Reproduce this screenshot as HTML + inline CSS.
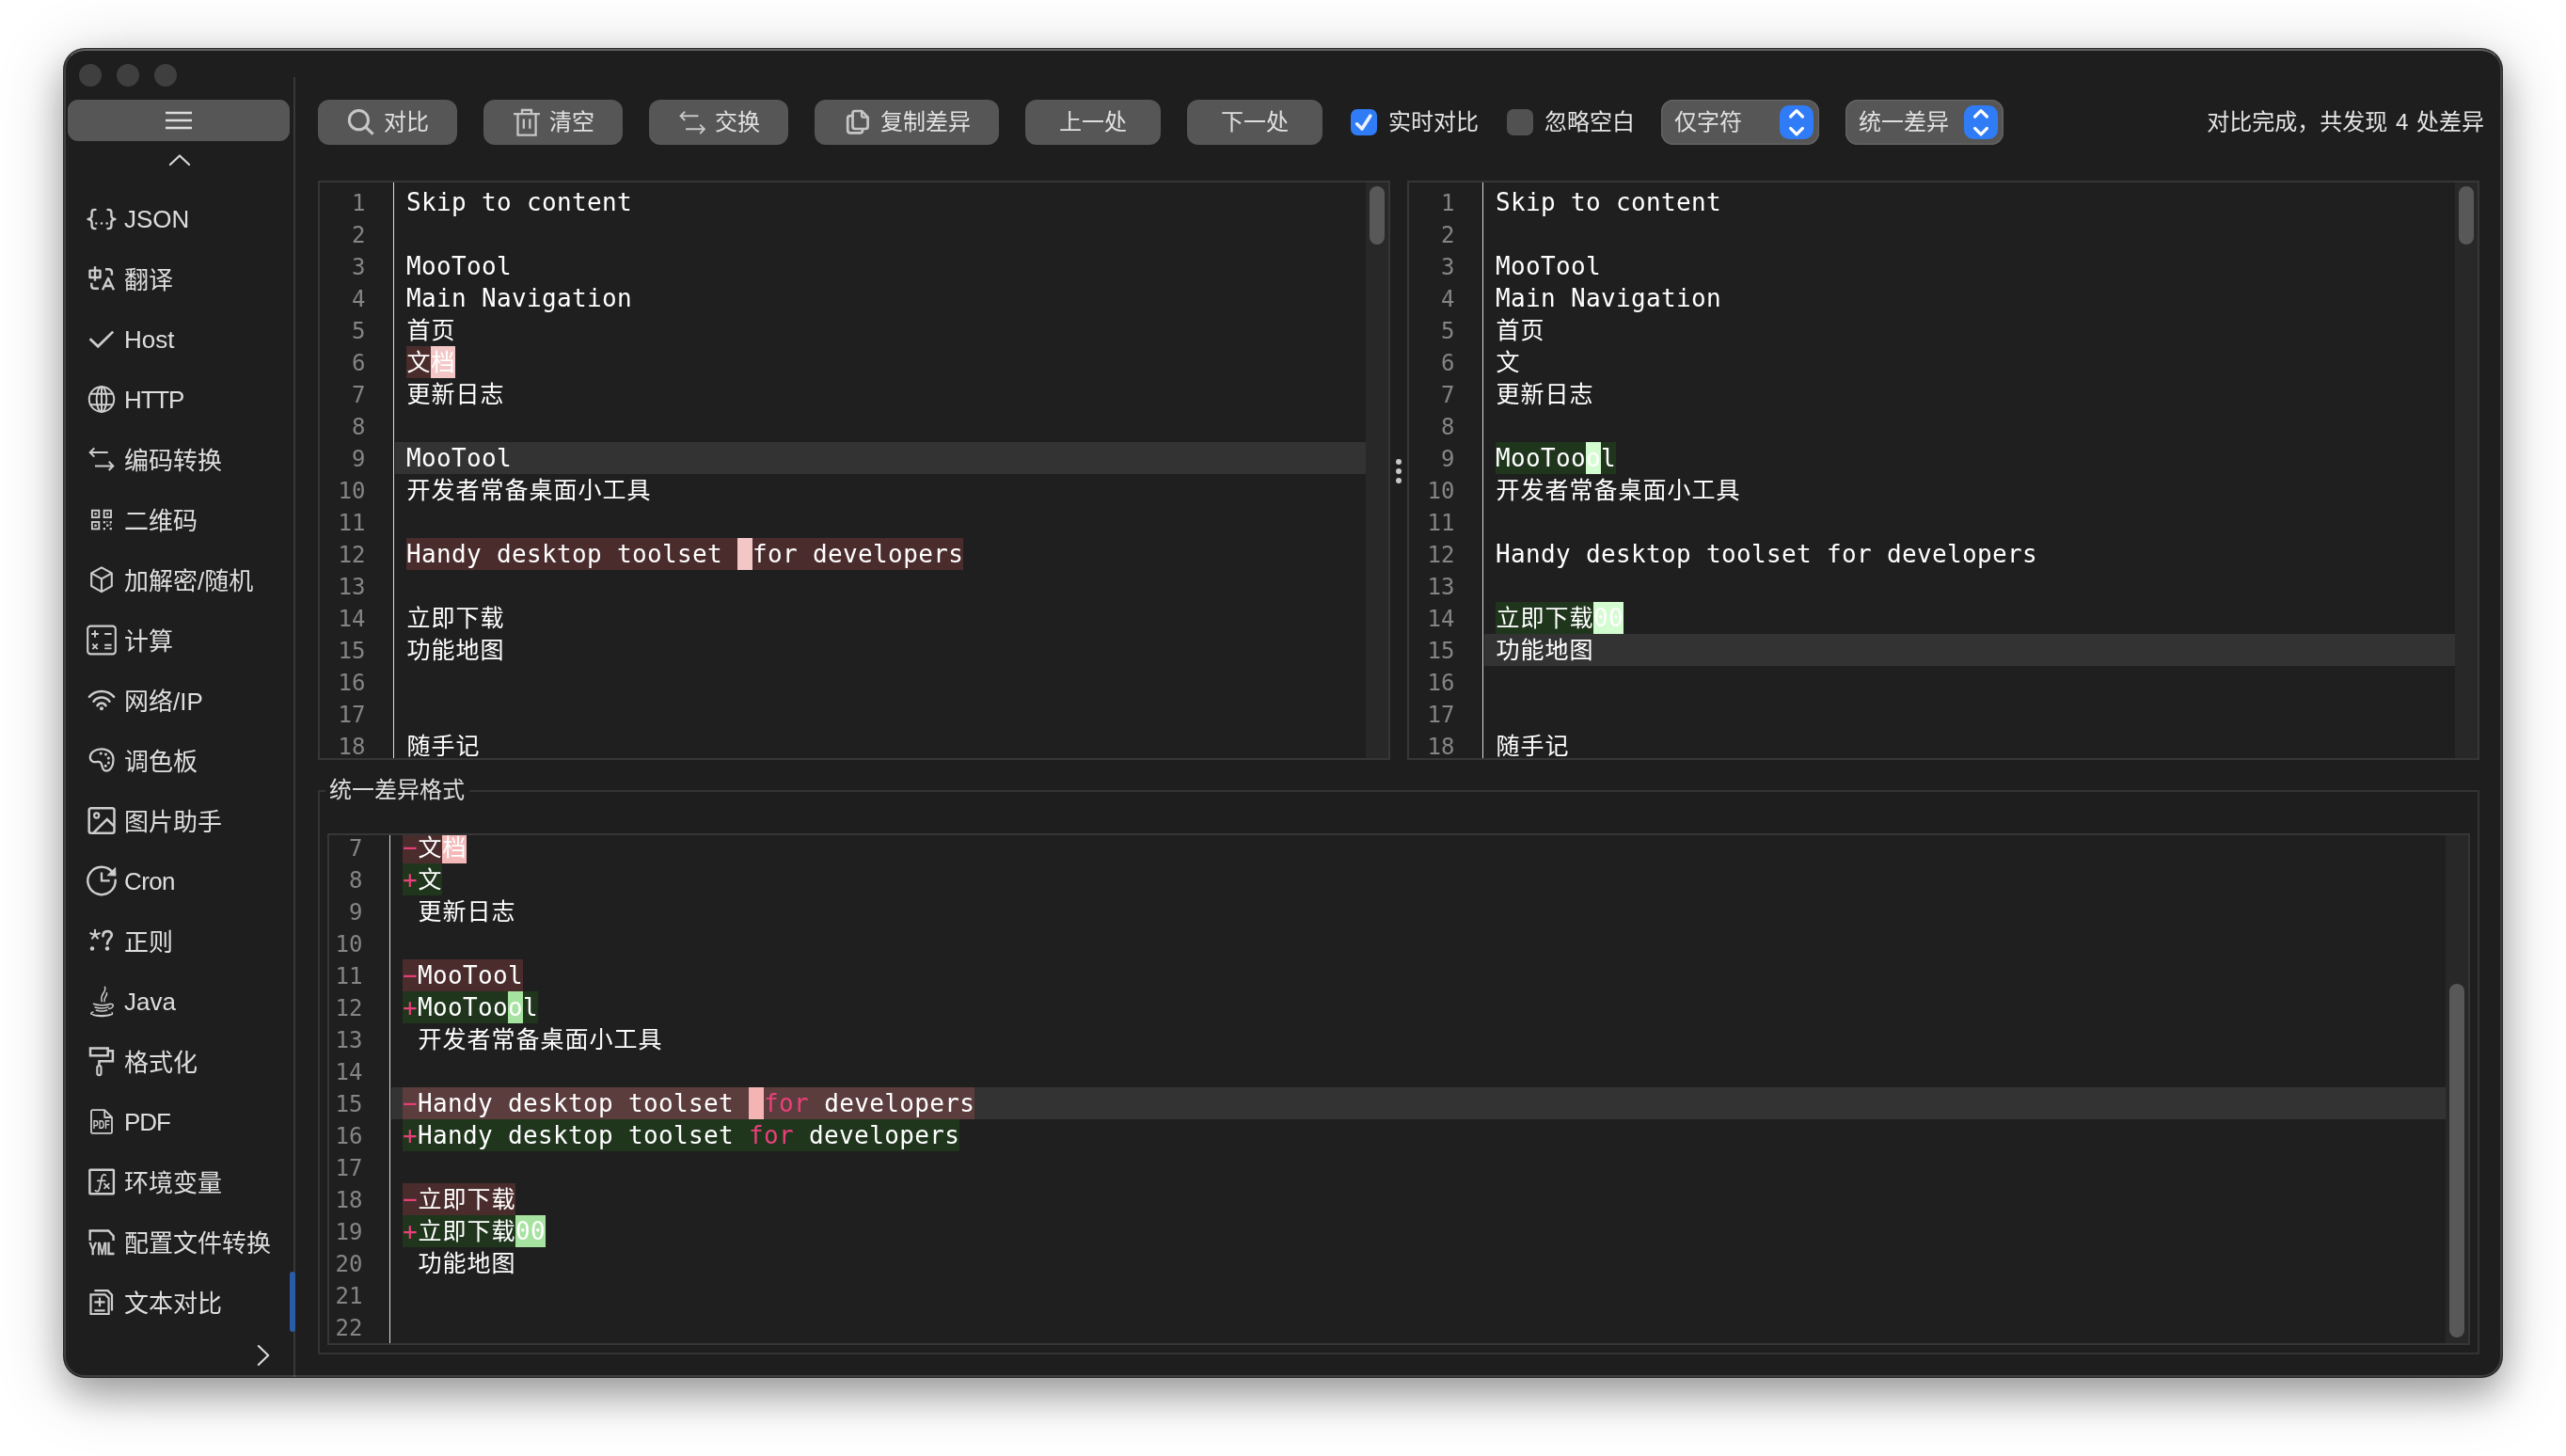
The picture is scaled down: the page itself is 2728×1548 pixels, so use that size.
<!DOCTYPE html><html lang="zh-CN"><head><meta charset="utf-8"><title>MooTool</title><style>
*{box-sizing:border-box;margin:0;padding:0}
html,body{width:2728px;height:1548px;overflow:hidden;background:#fff}
body{position:relative;font-family:"Liberation Sans","Noto Sans CJK SC",sans-serif;color:#dcdcdc}
.abs{position:absolute}
#win{position:absolute;left:68px;top:52px;width:2592px;height:1412px;background:#1e1e1e;border-radius:22px;
 box-shadow:0 0 0 1px rgba(0,0,0,.8),0 18px 38px rgba(0,0,0,.29),0 12px 72px rgba(0,0,0,.22);overflow:hidden;will-change:transform}
#win:after{content:"";position:absolute;left:0;top:0;right:0;bottom:0;border-radius:22px;border:2px solid rgba(255,255,255,.15);border-top-color:rgba(255,255,255,.3);pointer-events:none}
.tl{position:absolute;width:24px;height:24px;border-radius:50%;background:#3f3f3f;top:16px}
.sep{position:absolute;left:244px;top:30px;width:2px;bottom:0;background:#383838}
.hbtn{position:absolute;left:4px;top:54px;width:236px;height:44px;border-radius:11px;background:#565656}
.item{position:absolute;left:64px;height:40px;line-height:40px;font-size:26px;color:#dedede;white-space:nowrap}
.ico{position:absolute;left:22px;width:36px;height:36px}
.ico svg{width:36px;height:36px;display:block;fill:none;stroke:#cdcdcd;stroke-width:2.2;stroke-linecap:round;stroke-linejoin:round;overflow:visible}
.btn{position:absolute;top:54px;height:48px;border-radius:12px;background:#565656;color:#e0e0e0;font-size:24px;line-height:48px;white-space:nowrap}
.btn span{position:absolute;top:0}
.btn svg{position:absolute;left:0;top:0;fill:none;stroke:#c6c6c6;stroke-width:2.4;stroke-linecap:round;stroke-linejoin:round}
.cb{position:absolute;top:64px;width:28px;height:28px;border-radius:7px}
.lbl{position:absolute;top:54px;height:48px;line-height:48px;word-spacing:2px;font-size:24px;color:#e4e4e4;white-space:nowrap}
.sel{position:absolute;top:54px;height:48px;border-radius:13px;background:#565656;box-shadow:inset 0 0 0 1.5px #626262;font-size:24px;line-height:48px;color:#e0e0e0}
.sel .t{position:absolute;left:14px;top:0}
.sel .a{position:absolute;right:6px;top:6px;width:36px;height:36px;border-radius:10px;background:#2f7cf6}
.panel{position:absolute;border:2px solid #363636;background:#1f1f1f;overflow:hidden}
.code{font-family:"DejaVu Sans Mono","Noto Sans CJK SC",monospace;font-size:26px;letter-spacing:0.35px;color:#fff;white-space:pre}
.ln{position:absolute;left:0;height:34px;line-height:34px;text-align:right;color:#858585;font-family:"DejaVu Sans Mono",monospace;font-size:24px}
.row{position:absolute;height:34px;line-height:34px;white-space:pre}
.row span{display:inline-block;height:34px;line-height:34px;vertical-align:top}
.row i{font-style:normal;font-family:"Noto Sans CJK SC",sans-serif;display:inline-block;height:34px;line-height:34px;vertical-align:top;letter-spacing:1px;font-size:25px;position:relative;top:-2px;left:.5px}
.gsep{position:absolute;top:0;bottom:0;width:1px;background:#dcdcdc}
.hl{position:absolute;height:34px;background:#333}
.rm{background:#4b2c2c}.rmc{background:#f4c7c7}
.ad{background:#1f361d}.adc{background:#d3fcd0}
.k{color:#e8407a}
.track{position:absolute;top:0;bottom:0;width:24px;background:#282828}
.thumb{position:absolute;width:16px;border-radius:8px;background:#585858}
</style></head><body><div id="win"><div class="tl" style="left:16px"></div><div class="tl" style="left:56px"></div><div class="tl" style="left:96px"></div><div class="sep"></div><div class="hbtn"><svg class="abs" style="left:102px;top:10px" width="32" height="24" viewBox="0 0 32 24" fill="none" stroke="#dcdcdc" stroke-width="2.4"><path d="M2 4H30M2 12H30M2 20H30"/></svg></div><svg class="abs" style="left:107px;top:107px" width="32" height="20" viewBox="0 0 32 20" fill="none" stroke="#d6d6d6" stroke-width="2.2" stroke-linecap="round" stroke-linejoin="round"><path d="M5.9 16L16 6.5L26.1 16"/></svg><div class="ico" style="top:162.5px"><svg viewBox="0 0 36 36"><g stroke-width="2.4"><path d="M11.5 7.9H10.5C8.3 7.9 7.6 8.9 7.6 10.9V14.3C7.6 16.6 6.3 17.6 3.6 18C6.3 18.4 7.6 19.4 7.6 21.7V25.1C7.6 27.1 8.3 28.1 10.5 28.1H11.5"/><path d="M24.5 7.9H25.5C27.7 7.9 28.4 8.9 28.4 10.9V14.3C28.4 16.6 29.7 17.6 32.4 18C29.7 18.4 28.4 19.4 28.4 21.7V25.1C28.4 27.1 27.7 28.1 25.5 28.1H24.5"/></g><path d="M12.3 22.5h.01M18 22.5h.01M23.7 22.5h.01" stroke-width="2.5"/></svg></div><div class="item" style="top:161px">JSON</div><div class="ico" style="top:226.5px"><svg viewBox="0 0 36 36"><g stroke-width="2.4" stroke-linecap="butt"><path d="M5.5 8.6H16.5V16H5.5ZM11 4.2V19.8"/><path d="M22 7.2H25.5C27.8 7.2 28.9 8.3 28.9 10.6V13.8"/><path d="M7.3 21.8V24.4C7.3 26.7 8.4 27.8 10.7 27.8H14.9"/><path d="M19 29.2L25 16.8L31 29.2M21.3 25H28.7"/></g></svg></div><div class="item" style="top:226px">翻译</div><div class="ico" style="top:290.5px"><svg viewBox="0 0 36 36"><path d="M5.6 17.2L14.2 25.3L30.2 9.6" stroke-width="2.7" stroke-linecap="butt" stroke-linejoin="miter"/></svg></div><div class="item" style="top:289px">Host</div><div class="ico" style="top:354.5px"><svg viewBox="0 0 36 36"><g stroke-width="2"><circle cx="18" cy="17.5" r="13.2"/><ellipse cx="18" cy="17.5" rx="5.3" ry="13.2"/><path d="M18 4.3V30.7M6.3 11.8H29.7M6.3 23.2H29.7"/></g></svg></div><div class="item" style="top:353px;letter-spacing:-1.15px">HTTP</div><div class="ico" style="top:418.5px"><svg viewBox="0 0 36 36"><g stroke-width="2" stroke-linecap="butt" stroke-linejoin="miter"><path d="M24.7 10H6M10.3 5.4L5.7 10L10.3 14.6"/><path d="M11 24.4H30M25.7 19.8L30.3 24.4L25.7 29"/></g></svg></div><div class="item" style="top:418px">编码转换</div><div class="ico" style="top:482.5px"><svg viewBox="0 0 36 36"><g stroke-width="1.9" stroke-linejoin="miter" stroke-linecap="butt"><rect x="7.9" y="7.7" width="7.4" height="7.4"/><rect x="20.6" y="7.7" width="7.4" height="7.4"/><rect x="7.9" y="20" width="7.4" height="7.4"/></g><g fill="#cdcdcd" stroke="none"><rect x="10.4" y="10.2" width="2.4" height="2.4"/><rect x="23.1" y="10.2" width="2.4" height="2.4"/><rect x="10.4" y="22.5" width="2.4" height="2.4"/><rect x="19.7" y="19.1" width="2.3" height="2.3"/><rect x="26.6" y="19.1" width="2.3" height="2.3"/><rect x="23.1" y="22.5" width="2.3" height="2.3"/><rect x="19.7" y="26" width="2.3" height="2.3"/><rect x="26.6" y="26" width="2.3" height="2.3"/><rect x="26.6" y="22.5" width="1.3" height="1.3"/><rect x="23.1" y="19.1" width="1.3" height="1.3"/></g></svg></div><div class="item" style="top:482px">二维码</div><div class="ico" style="top:546.5px"><svg viewBox="0 0 36 36"><g stroke-width="2.1" stroke-linejoin="round"><path d="M18 4.4L28.8 10.4V24.2L18 30.2L7.2 24.2V10.4Z"/><path d="M7.6 10.6L18 16.4L28.4 10.6M18 16.4V30"/></g></svg></div><div class="item" style="top:546px">加解密/随机</div><div class="ico" style="top:610.5px"><svg viewBox="0 0 36 36"><rect x="3.2" y="2.6" width="29.6" height="29.8" rx="3.2" stroke-width="2.1"/><path d="M7.2 11H14.8M11 7.2V14.8M21.2 11H28.6M8.3 21.7L13.7 27.1M13.7 21.7L8.3 27.1M21.2 22.7H28.6M21.2 26.4H28.6" stroke-width="1.9" stroke-linecap="butt"/></svg></div><div class="item" style="top:610px">计算</div><div class="ico" style="top:674.5px"><svg viewBox="0 0 36 36"><g stroke-width="2.5"><path d="M4.9 13.9C12 6.1 24 6.1 31.1 13.9M9.5 18.7C14 13.1 22 13.1 26.5 18.7M13.5 23.3C16 19.6 20 19.6 22.5 23.3"/></g><circle cx="18" cy="26.2" r="2" fill="#cdcdcd" stroke="none"/></svg></div><div class="item" style="top:674px">网络/IP</div><div class="ico" style="top:738.5px"><svg viewBox="0 0 36 36"><path d="M18 5.3C25.7 5.3 30.5 10.3 30.5 16.7C30.5 23.3 27.3 28.6 22.9 28.6C19.3 28.6 18.8 25.4 18.3 22.8C17.8 20.2 16.2 18.3 13.6 18.9C10.6 19.6 5.8 19.3 5.8 14C5.8 9.2 11 5.3 18 5.3Z" stroke-width="2.2"/><g fill="#cdcdcd" stroke="none"><circle cx="17.2" cy="9.9" r="1.5"/><circle cx="22.5" cy="10.9" r="1.5"/><circle cx="25.4" cy="14.9" r="1.5"/><circle cx="25.4" cy="19.9" r="1.5"/><circle cx="22.2" cy="23.3" r="1.5"/></g></svg></div><div class="item" style="top:738px">调色板</div><div class="ico" style="top:802.5px"><svg viewBox="0 0 36 36"><g stroke-width="2.5" stroke-linejoin="miter"><rect x="4.7" y="4.2" width="26.8" height="26.6" rx="2.3"/><circle cx="12.7" cy="12" r="2.6" stroke-width="2.1"/><path d="M9.5 30.3L23.8 16L31 23.2" stroke-linecap="butt"/></g></svg></div><div class="item" style="top:802px">图片助手</div><div class="ico" style="top:866.5px"><svg viewBox="0 0 36 36"><g stroke-width="2.5" stroke-linecap="butt" stroke-linejoin="miter"><path d="M29.74 8.55A14.7 14.7 0 1 0 32.68 16.63" stroke-linecap="round"/><path d="M32.7 3.4L33 12.1L24 11.7Z" fill="#cdcdcd" stroke-width="0.8" stroke-linejoin="round"/><path d="M18 8.5V17.4H26.7" stroke-width="2.3"/></g></svg></div><div class="item" style="top:865px;letter-spacing:-0.65px">Cron</div><div class="ico" style="top:930.5px"><svg viewBox="0 0 36 36"><g fill="#cdcdcd" stroke="none"><circle cx="8" cy="25.6" r="2.25"/><circle cx="24" cy="25.6" r="2.25"/></g><path d="M11 10.9V5.7M11 10.9L6.2 9.3M11 10.9L15.8 9.3M11 10.9L8.1 14.7M11 10.9L13.9 14.7" stroke-width="2.1" stroke-linecap="round"/><path d="M19.5 12.2C19.5 9 21.5 7.2 24.3 7.2C27 7.2 28.8 8.9 28.8 11.1C28.8 15 24 15.5 24 20.5" stroke-width="2.7" stroke-linecap="round"/></svg></div><div class="item" style="top:930px">正则</div><div class="ico" style="top:994.5px"><svg viewBox="0 0 36 36"><g stroke-width="1.5"><path d="M21.4 2.3C24 7.5 15.2 10.5 18.4 17.8M23.5 8.8C24.5 12 19.7 13.5 21 17.8"/><path d="M9.5 20.2C14 22.2 23 22.2 27.5 20.2M11 23.7C15 25.4 21.5 25.4 25 23.7M12.3 27C15.5 28.3 21 28.3 23.7 27M27 20.6C31.5 19.5 31.5 24.5 25.8 25.6"/><path d="M9 29C3.5 30.5 8 32.6 18 32.6C26 32.6 31.5 31 29 29.5M9.5 32.5C14 34 24 34 29.5 31.5" stroke-width="1.3"/></g></svg></div><div class="item" style="top:993px">Java</div><div class="ico" style="top:1058.5px"><svg viewBox="0 0 36 36"><g stroke-width="2.5" stroke-linejoin="miter" stroke-linecap="butt"><rect x="6" y="3.5" width="18.7" height="7.8"/><path d="M24.7 6.2H29.9V17.2H15.4V21.5"/><rect x="13.3" y="22" width="4.2" height="10.2" rx="2.1" stroke-width="2.1"/></g></svg></div><div class="item" style="top:1058px">格式化</div><div class="ico" style="top:1122.5px"><svg viewBox="0 0 36 36"><path d="M8.6 5.2H21.2L29 13V28.4C29 29.4 28.5 29.8 27.6 29.8H8.4C7.5 29.8 7 29.4 7 28.4V6.6C7 5.7 7.5 5.2 8.6 5.2ZM21.2 5.4V13H28.8" stroke-width="1.8"/><text x="17.8" y="24.7" font-family="Liberation Sans,sans-serif" font-size="12.4" font-weight="bold" text-anchor="middle" fill="#cdcdcd" stroke="none" textLength="18" lengthAdjust="spacingAndGlyphs">PDF</text></svg></div><div class="item" style="top:1121px;letter-spacing:-1px">PDF</div><div class="ico" style="top:1186.5px"><svg viewBox="0 0 36 36"><rect x="5.4" y="4.7" width="25.5" height="25.6" rx="0.6" stroke-width="2.4" stroke-linejoin="miter"/><path d="M22.3 10.4C20.3 9 18.7 10.2 18.2 12.8L15.7 25C15.2 27.6 13.3 28.3 11.4 26.8M13.8 16.3H21.8" stroke-width="1.7"/><path d="M21 19.6L25.8 24.4M25.8 19.6L21 24.4" stroke-width="1.7"/></svg></div><div class="item" style="top:1186px">环境变量</div><div class="ico" style="top:1250.5px"><svg viewBox="0 0 36 36"><path d="M5.7 15.9V5.5H25.3L30.6 11.3V15.9" stroke-width="2.4" stroke-linejoin="miter" stroke-linecap="butt"/><text x="18.1" y="30.9" font-family="Liberation Sans,sans-serif" font-size="18" font-weight="bold" text-anchor="middle" fill="#cdcdcd" stroke="#cdcdcd" stroke-width="0.5" textLength="27" lengthAdjust="spacingAndGlyphs">YML</text></svg></div><div class="item" style="top:1250px">配置文件转换</div><div class="ico" style="top:1314.5px"><svg viewBox="0 0 36 36"><g stroke-width="2.2" stroke-linejoin="miter" stroke-linecap="butt"><path d="M10.4 5.2H24.6L29 9.8V26.6"/><path d="M6.5 9.3H21.6L25.6 13.3V30H6.5Z"/><path d="M10.4 17.3H21.6M16 12.4V22.2M10.4 26.4H21.6"/></g></svg></div><div class="item" style="top:1314px">文本对比</div><div class="abs" style="left:240px;top:1300px;width:6px;height:64px;border-radius:3px;background:#2a5caa"></div><svg class="abs" style="left:202px;top:1374px" width="20" height="30" viewBox="0 0 20 30" fill="none" stroke="#dadada" stroke-width="2.1" stroke-linecap="round" stroke-linejoin="round"><path d="M4.8 5L15.2 15L4.8 25"/></svg><div class="btn" style="left:270px;width:148px"><svg width="148" height="48" viewBox="0 0 148 48"><circle cx="43.4" cy="21.7" r="10.1" stroke-width="3"/><path d="M50.8 29.1L58.6 36.6" stroke-width="3" stroke-linecap="butt"/></svg><span style="left:70px">对比</span></div><div class="btn" style="left:446px;width:148px"><svg width="148" height="48" viewBox="0 0 148 48"><g stroke-linecap="butt" stroke-linejoin="miter"><path d="M32 15.2H60M41 15V11H51V15M36.5 15.5V37.6H55.6V15.5M42.8 20.5V30.7M49.3 20.5V30.7" stroke-width="2.3"/></g></svg><span style="left:70px">清空</span></div><div class="btn" style="left:622px;width:148px"><svg width="148" height="48" viewBox="0 0 148 48"><g stroke-linecap="butt" stroke-linejoin="miter" stroke-width="1.9"><path d="M52.4 17.3H34M38.2 12.6L33.5 17.3L38.2 22"/><path d="M39.1 31.3H58.4M54.2 26.6L58.9 31.3L54.2 36"/></g></svg><span style="left:70px">交换</span></div><div class="btn" style="left:798px;width:196px"><svg width="196" height="48" viewBox="0 0 196 48"><g stroke-width="2.7"><path d="M43 12H50L56.6 18.6V28.5C56.6 30.2 55.8 31 54.1 31H43C41.3 31 40.5 30.2 40.5 28.5V14.5C40.5 12.8 41.3 12 43 12Z"/><path d="M50 12.5V16.5C50 18 50.7 18.7 52.2 18.7H56.2" stroke-width="2.3"/><path d="M40.3 17.2H38C36.2 17.2 35.2 18.2 35.2 20V32.6C35.2 34.4 36.2 35.4 38 35.4H48.3C50.1 35.4 51.1 34.4 51.1 32.6V31.3"/></g></svg><span style="left:70px">复制差异</span></div><div class="btn" style="left:1022px;width:144px"><span style="left:36px">上一处</span></div><div class="btn" style="left:1194px;width:144px"><span style="left:36px">下一处</span></div><div class="cb" style="left:1368px;background:#2f7cf6"><svg width="28" height="28" viewBox="0 0 28 28" fill="none" stroke="#eaf1ff" stroke-width="3.6" stroke-linecap="round" stroke-linejoin="round"><path d="M6.6 15.8L12 21L20.8 7.2"/></svg></div><div class="lbl" style="left:1408px">实时对比</div><div class="cb" style="left:1534px;background:#515151"></div><div class="lbl" style="left:1574px">忽略空白</div><div class="sel" style="left:1698px;width:168px"><span class="t">仅字符</span><div class="a"><svg width="36" height="36" viewBox="0 0 36 36" fill="none" stroke="#fff" stroke-width="3.2" stroke-linecap="round" stroke-linejoin="round"><path d="M11.6 12L18 5.6L24.4 12M11.6 24.4L18 30.8L24.4 24.4"/></svg></div></div><div class="sel" style="left:1894px;width:168px"><span class="t">统一差异</span><div class="a"><svg width="36" height="36" viewBox="0 0 36 36" fill="none" stroke="#fff" stroke-width="3.2" stroke-linecap="round" stroke-linejoin="round"><path d="M11.6 12L18 5.6L24.4 12M11.6 24.4L18 30.8L24.4 24.4"/></svg></div></div><div class="lbl" style="right:19px">对比完成，共发现 4 处差异</div><div class="panel" style="left:270px;top:140px;width:1140px;height:616px"><div class="track" style="right:0"></div><div class="hl" style="left:80px;right:24px;top:276px"></div><div class="gsep" style="left:78px"></div><div class="ln" style="top:5px;width:48.5px">1</div><div class="row code" style="left:92px;top:4px">Skip to content</div><div class="ln" style="top:39px;width:48.5px">2</div><div class="ln" style="top:73px;width:48.5px">3</div><div class="row code" style="left:92px;top:72px">MooTool</div><div class="ln" style="top:107px;width:48.5px">4</div><div class="row code" style="left:92px;top:106px">Main Navigation</div><div class="ln" style="top:141px;width:48.5px">5</div><div class="row code" style="left:92px;top:140px"><i>首页</i></div><div class="ln" style="top:175px;width:48.5px">6</div><div class="row code" style="left:92px;top:174px"><span class="rm"><i>文</i><span class="rmc"><i>档</i></span></span></div><div class="ln" style="top:209px;width:48.5px">7</div><div class="row code" style="left:92px;top:208px"><i>更新日志</i></div><div class="ln" style="top:243px;width:48.5px">8</div><div class="ln" style="top:277px;width:48.5px">9</div><div class="row code" style="left:92px;top:276px">MooTool</div><div class="ln" style="top:311px;width:48.5px">10</div><div class="row code" style="left:92px;top:310px"><i>开发者常备桌面小工具</i></div><div class="ln" style="top:345px;width:48.5px">11</div><div class="ln" style="top:379px;width:48.5px">12</div><div class="row code" style="left:92px;top:378px"><span class="rm">Handy desktop toolset <span class="rmc"> </span>for developers</span></div><div class="ln" style="top:413px;width:48.5px">13</div><div class="ln" style="top:447px;width:48.5px">14</div><div class="row code" style="left:92px;top:446px"><i>立即下载</i></div><div class="ln" style="top:481px;width:48.5px">15</div><div class="row code" style="left:92px;top:480px"><i>功能地图</i></div><div class="ln" style="top:515px;width:48.5px">16</div><div class="ln" style="top:549px;width:48.5px">17</div><div class="ln" style="top:583px;width:48.5px">18</div><div class="row code" style="left:92px;top:582px"><i>随手记</i></div><div class="thumb" style="right:4px;top:4px;height:62px"></div></div><div class="panel" style="left:1428px;top:140px;width:1140px;height:616px"><div class="track" style="right:0"></div><div class="hl" style="left:80px;right:24px;top:480px"></div><div class="gsep" style="left:78px"></div><div class="ln" style="top:5px;width:48.5px">1</div><div class="row code" style="left:92px;top:4px">Skip to content</div><div class="ln" style="top:39px;width:48.5px">2</div><div class="ln" style="top:73px;width:48.5px">3</div><div class="row code" style="left:92px;top:72px">MooTool</div><div class="ln" style="top:107px;width:48.5px">4</div><div class="row code" style="left:92px;top:106px">Main Navigation</div><div class="ln" style="top:141px;width:48.5px">5</div><div class="row code" style="left:92px;top:140px"><i>首页</i></div><div class="ln" style="top:175px;width:48.5px">6</div><div class="row code" style="left:92px;top:174px"><i>文</i></div><div class="ln" style="top:209px;width:48.5px">7</div><div class="row code" style="left:92px;top:208px"><i>更新日志</i></div><div class="ln" style="top:243px;width:48.5px">8</div><div class="ln" style="top:277px;width:48.5px">9</div><div class="row code" style="left:92px;top:276px"><span class="ad">MooToo<span class="adc">o</span>l</span></div><div class="ln" style="top:311px;width:48.5px">10</div><div class="row code" style="left:92px;top:310px"><i>开发者常备桌面小工具</i></div><div class="ln" style="top:345px;width:48.5px">11</div><div class="ln" style="top:379px;width:48.5px">12</div><div class="row code" style="left:92px;top:378px">Handy desktop toolset for developers</div><div class="ln" style="top:413px;width:48.5px">13</div><div class="ln" style="top:447px;width:48.5px">14</div><div class="row code" style="left:92px;top:446px"><span class="ad"><i>立即下载</i><span class="adc">00</span></span></div><div class="ln" style="top:481px;width:48.5px">15</div><div class="row code" style="left:92px;top:480px"><i>功能地图</i></div><div class="ln" style="top:515px;width:48.5px">16</div><div class="ln" style="top:549px;width:48.5px">17</div><div class="ln" style="top:583px;width:48.5px">18</div><div class="row code" style="left:92px;top:582px"><i>随手记</i></div><div class="thumb" style="right:4px;top:4px;height:62px"></div></div><div class="abs" style="left:1416px;top:435.5px;width:6px;height:6px;border-radius:3px;background:#c8c8c8"></div><div class="abs" style="left:1416px;top:445.5px;width:6px;height:6px;border-radius:3px;background:#c8c8c8"></div><div class="abs" style="left:1416px;top:455.5px;width:6px;height:6px;border-radius:3px;background:#c8c8c8"></div><div class="abs" style="left:270px;top:788px;width:2298px;height:600px;border:2px solid #333"></div><div class="abs" style="left:278px;top:768px;height:40px;line-height:40px;padding:0 5px 0 4px;background:#1e1e1e;font-size:24px;color:#dedede">统一差异格式</div><div class="panel" style="left:280px;top:834px;width:2278px;height:544px"><div class="track" style="right:0"></div><div class="hl" style="left:66px;right:24px;top:268px"></div><div class="gsep" style="left:64px"></div><div class="ln" style="top:-3px;width:35.5px">7</div><div class="row code" style="left:78px;top:-4px"><span class="rm"><span class="k">−</span><i>文</i><span class="rmc" style="background:#f4b8b8"><i>档</i></span></span></div><div class="ln" style="top:31px;width:35.5px">8</div><div class="row code" style="left:78px;top:30px"><span class="ad"><span class="k">+</span><i>文</i></span></div><div class="ln" style="top:65px;width:35.5px">9</div><div class="row code" style="left:78px;top:64px"> <i>更新日志</i></div><div class="ln" style="top:99px;width:35.5px">10</div><div class="ln" style="top:133px;width:35.5px">11</div><div class="row code" style="left:78px;top:132px"><span class="rm"><span class="k">−</span>MooTool</span></div><div class="ln" style="top:167px;width:35.5px">12</div><div class="row code" style="left:78px;top:166px"><span class="ad"><span class="k">+</span>MooToo<span class="adc" style="background:#a6e3a0">o</span>l</span></div><div class="ln" style="top:201px;width:35.5px">13</div><div class="row code" style="left:78px;top:200px"> <i>开发者常备桌面小工具</i></div><div class="ln" style="top:235px;width:35.5px">14</div><div class="ln" style="top:269px;width:35.5px">15</div><div class="row code" style="left:78px;top:268px"><span class="rm" style="background:#5c3d3d"><span class="k">−</span>Handy desktop toolset <span class="rmc" style="background:#f4b4b4"> </span><span class="k">for</span> developers</span></div><div class="ln" style="top:303px;width:35.5px">16</div><div class="row code" style="left:78px;top:302px"><span class="ad"><span class="k">+</span>Handy desktop toolset <span class="k">for</span> developers</span></div><div class="ln" style="top:337px;width:35.5px">17</div><div class="ln" style="top:371px;width:35.5px">18</div><div class="row code" style="left:78px;top:370px"><span class="rm"><span class="k">−</span><i>立即下载</i></span></div><div class="ln" style="top:405px;width:35.5px">19</div><div class="row code" style="left:78px;top:404px"><span class="ad"><span class="k">+</span><i>立即下载</i><span class="adc" style="background:#a6e3a0">00</span></span></div><div class="ln" style="top:439px;width:35.5px">20</div><div class="row code" style="left:78px;top:438px"> <i>功能地图</i></div><div class="ln" style="top:473px;width:35.5px">21</div><div class="ln" style="top:507px;width:35.5px">22</div><div class="thumb" style="right:4px;top:158px;height:376px"></div></div></div></body></html>
